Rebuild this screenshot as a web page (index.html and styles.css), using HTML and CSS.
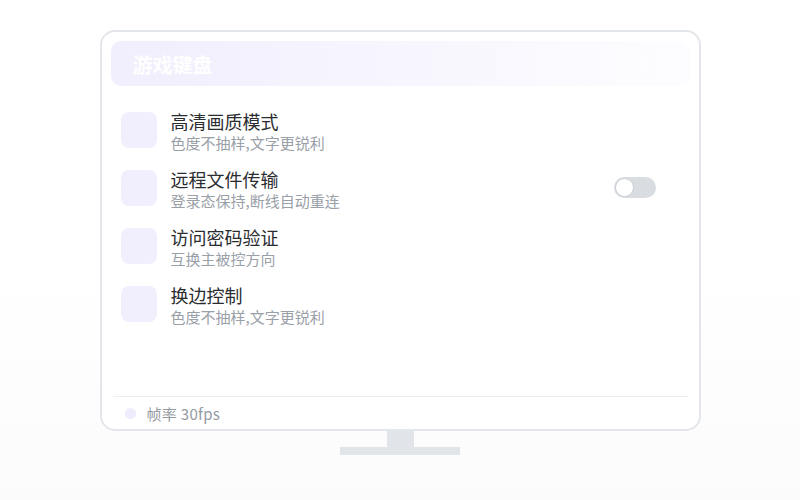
FILE: index.html
```html
<html>
<head>
  <meta charset="utf-8">
  <link rel="stylesheet" href="styles.css">
</head>
<body>
  <div id="app">
    <div class="monitor">
      <div class="screen-head">
        <span class="screen-title">游戏键盘</span>
        <span class="head-tools">
          <svg width="16" height="16" viewBox="0 0 16 16"><circle cx="8" cy="8" r="6" fill="none" stroke="#fff" stroke-width="2"/></svg>
          <svg width="16" height="16" viewBox="0 0 16 16"><path d="M3 3 L13 13 M13 3 L3 13" stroke="#fff" stroke-width="2"/></svg>
        </span>
      </div>
      <div class="opt-list">
        <div class="opt">
          <div class="opt-icon"></div>
          <div class="opt-text">
            <div class="opt-title">高清画质模式</div>
            <div class="opt-sub">色度不抽样,文字更锐利</div>
          </div>
        </div>
        <div class="opt">
          <div class="opt-icon"></div>
          <div class="opt-text">
            <div class="opt-title">远程文件传输</div>
            <div class="opt-sub">登录态保持,断线自动重连</div>
          </div>
          <div class="toggle"><span class="knob"></span></div>
        </div>
        <div class="opt">
          <div class="opt-icon"></div>
          <div class="opt-text">
            <div class="opt-title">访问密码验证</div>
            <div class="opt-sub">互换主被控方向</div>
          </div>
        </div>
        <div class="opt">
          <div class="opt-icon"></div>
          <div class="opt-text">
            <div class="opt-title">换边控制</div>
            <div class="opt-sub">色度不抽样,文字更锐利</div>
          </div>
        </div>
      </div>
      <div class="screen-foot">
        <span class="dot"></span>
        <span class="fps">帧率 30fps</span>
      </div>
    </div>
    <div class="neck"></div>
    <div class="base"></div>
  </div>
</body>
</html>
```

FILE: styles.css
```css
*, *:before, *:after { box-sizing: border-box; }
html, body { height: 100%; }
body {
  margin: 0;
  padding: 0;
  font-family: "Noto Sans CJK SC", "Noto Sans", sans-serif;
  background: linear-gradient(#ffffff 0%, #ffffff 55%, #fbfbfc 100%);
}
#app {
  display: flex;
  flex-direction: column;
  align-items: center;
  padding-top: 30px;
}

/* monitor */
.monitor {
  width: 601px;
  height: 401px;
  border: 2px solid #e3e6ea;
  border-radius: 15px;
  background-color: #fff;
  padding: 9px 9px 0 9px;
  display: flex;
  flex-direction: column;
}
.neck {
  width: 27px;
  height: 16px;
  background-color: #e1e4e8;
}
.base {
  width: 120px;
  height: 8px;
  background-color: #e1e4e8;
}

/* header */
.screen-head {
  height: 45px;
  border-radius: 10px;
  background: linear-gradient(90deg, #f1eefd 0%, #f6f4fe 40%, #fdfdff 100%);
  display: flex;
  align-items: center;
  padding: 0 12px 0 22px;
}
.screen-title {
  color: #fff;
  font-size: 20px;
  font-weight: bold;
  line-height: 26px;
  margin-top: 2px;
}
.head-tools {
  margin-left: auto;
  display: flex;
  gap: 14px;
  opacity: 0.6;
}

/* options */
.opt-list {
  flex: 1;
  padding: 25px 10px 0 10px;
  display: flex;
  flex-direction: column;
  gap: 15px;
}
.opt {
  display: flex;
  align-items: flex-start;
  height: 43px;
}
.opt-icon {
  width: 36px;
  height: 36px;
  margin-top: 1px;
  border-radius: 8px;
  background-color: #f1effd;
  flex: 0 0 36px;
}
.opt-text { margin-left: 14px; margin-top: -1px; }
.opt-title {
  font-size: 18px;
  line-height: 22px;
  color: #2a2c30;
}
.opt-sub {
  font-size: 15px;
  line-height: 21px;
  color: #9aa0a8;
}
.toggle {
  margin-left: auto;
  margin-right: 24px;
  margin-top: 8px;
  width: 42px;
  height: 21px;
  border-radius: 11px;
  background-color: #d9dce1;
  padding: 1px;
}
.knob {
  display: block;
  width: 19px;
  height: 19px;
  border-radius: 50%;
  background-color: #fff;
  border: 1px solid #cdd0d6;
}

/* footer */
.screen-foot {
  margin: 0 2px;
  height: 33px;
  border-top: 1px solid #eceef2;
  display: flex;
  align-items: center;
  padding-left: 12px;
}
.dot {
  width: 11px;
  height: 11px;
  border-radius: 50%;
  background-color: #efecfd;
}
.fps {
  margin-left: 11px;
  font-size: 15px;
  letter-spacing: 0.3px;
  color: #959aa2;
}
```
